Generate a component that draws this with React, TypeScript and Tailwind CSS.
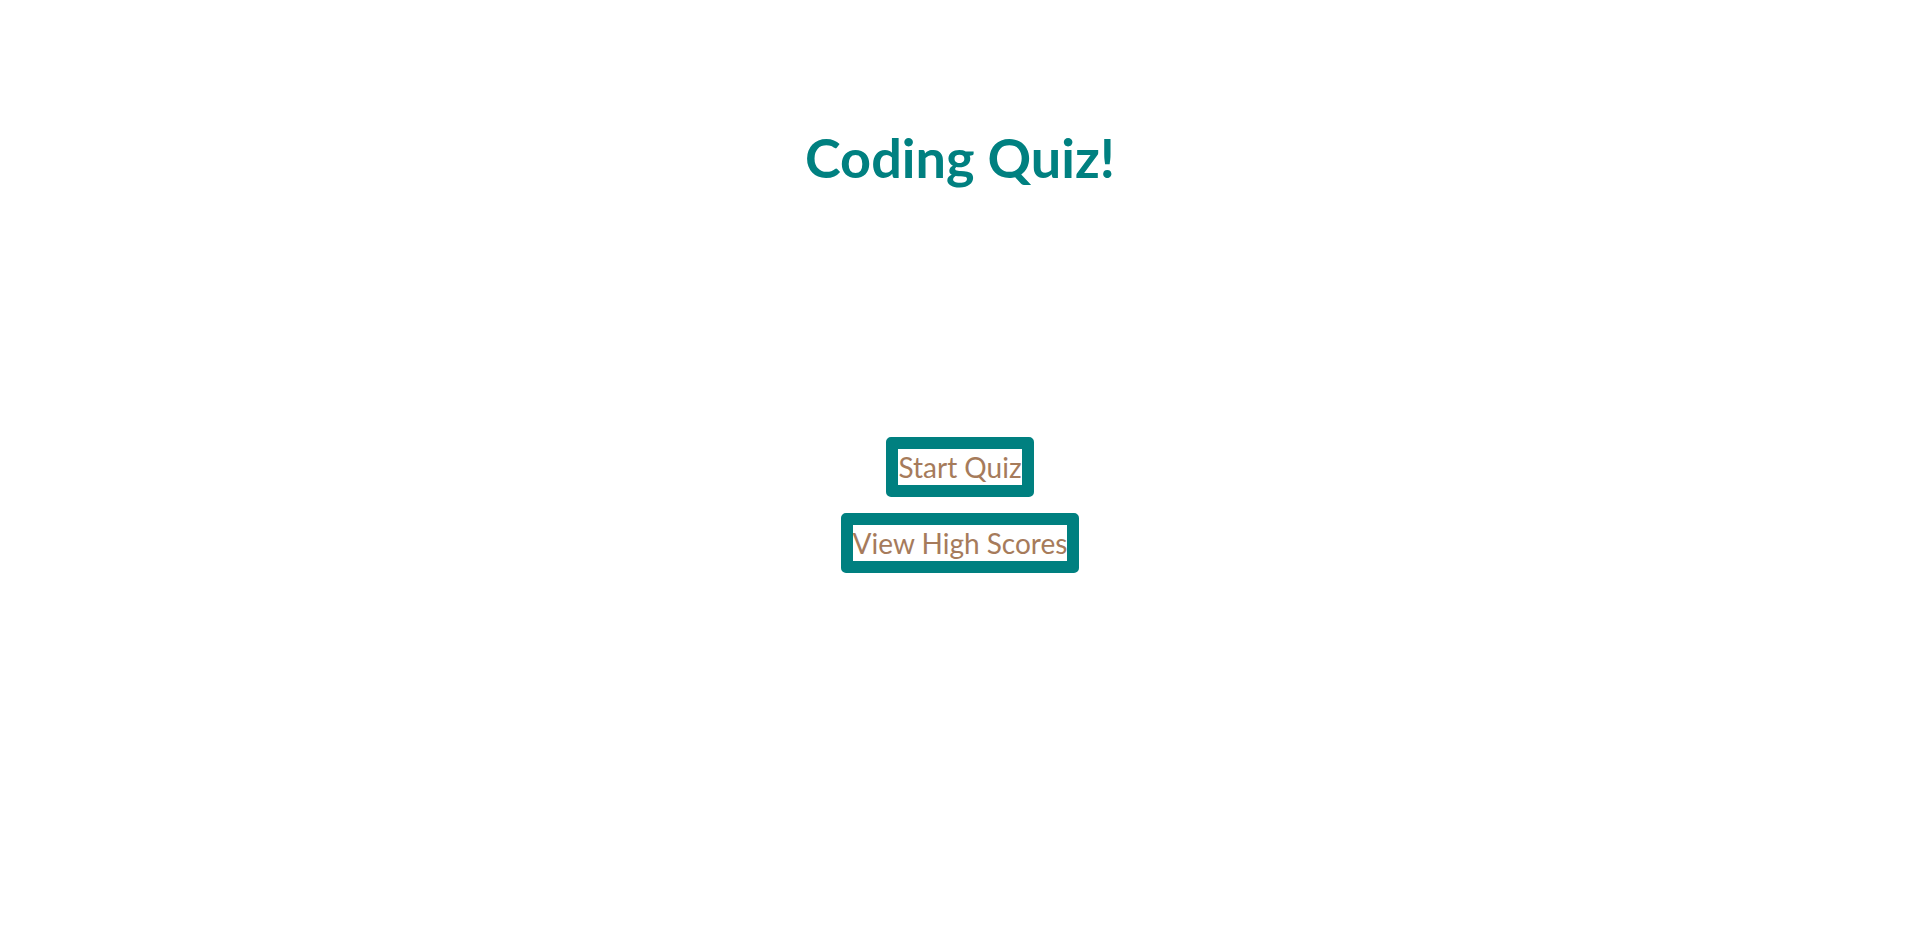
export default function App() {
  return (
    <div className="min-h-screen bg-white font-['Lato','Open_Sans',sans-serif]">
      <main className="flex flex-col items-center">
        <h1 className="mt-[128px] text-[54px] font-bold leading-[60px] text-[#008080]">
          Coding Quiz!
        </h1>

        <div className="mt-[249px] flex flex-col items-center gap-4">
          <button className="rounded-[5px] border-[12px] border-[#008080] bg-white text-[28px] leading-[36px] text-[#a67b5b]">
            Start Quiz
          </button>
          <button className="rounded-[5px] border-[12px] border-[#008080] bg-white text-[28px] leading-[36px] text-[#a67b5b]">
            View High Scores
          </button>
        </div>
      </main>
    </div>
  );
}
